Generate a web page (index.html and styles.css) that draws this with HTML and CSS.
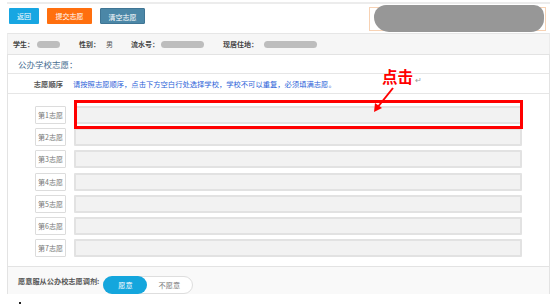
FILE: index.html
```html
<!DOCTYPE html>
<html lang="zh-CN">
<head>
    <meta charset="UTF-8">
    <title>志愿填报</title>
    <link rel="stylesheet" href="styles.css">
</head>
<body>
    <div class="wrap">
        <div class="toolbar">
            <button class="btn btn-back">返回</button>
            <button class="btn btn-submit">提交志愿</button>
            <button class="btn btn-clear">清空志愿</button>
            <div class="school-box"><div class="school-mask"></div></div>
        </div>

        <div class="info-bar">
            <span class="info-label">学生：</span><span class="mask mask-name"></span>
            <span class="info-label gap-l">性别：</span><span class="info-value">男</span>
            <span class="info-label gap-m">流水号：</span><span class="mask mask-no"></span>
            <span class="info-label gap-l">现居住地：</span><span class="mask mask-addr"></span>
        </div>

        <div class="panel">
            <div class="panel-title">公办学校志愿：</div>
            <div class="tip-row">
                <span class="tip-label">志愿顺序</span>
                <span class="tip-text">请按照志愿顺序，点击下方空白行处选择学校，学校不可以重复，必须填满志愿。</span>
            </div>

            <div class="choices">
                <div class="choice"><span class="choice-no">第1志愿</span><div class="choice-input"></div></div>
                <div class="choice"><span class="choice-no">第2志愿</span><div class="choice-input"></div></div>
                <div class="choice"><span class="choice-no">第3志愿</span><div class="choice-input"></div></div>
                <div class="choice"><span class="choice-no">第4志愿</span><div class="choice-input"></div></div>
                <div class="choice"><span class="choice-no">第5志愿</span><div class="choice-input"></div></div>
                <div class="choice"><span class="choice-no">第6志愿</span><div class="choice-input"></div></div>
                <div class="choice"><span class="choice-no">第7志愿</span><div class="choice-input"></div></div>
            </div>

            <div class="adjust-row">
                <span class="adjust-label">愿意服从公办校志愿调剂:</span>
                <div class="switch">
                    <span class="switch-item active">愿意</span>
                    <span class="switch-item">不愿意</span>
                </div>
            </div>
        </div>
    </div>
    <div class="foot-mark"><span></span></div>

    <!-- 截图标注 -->
    <div class="mark-box"></div>
    <div class="mark-text">点击<span class="mark-return">↵</span></div>
    <svg class="mark-arrow" width="30" height="30" viewBox="0 0 30 30">
        <line x1="23" y1="2" x2="7" y2="22" stroke="#ff0000" stroke-width="2"/>
        <polygon points="4,26 5,17 12,22" fill="#ff0000"/>
    </svg>
</body>
</html>
```

FILE: styles.css
```css
body {
    margin: 0;
    font-family: "Noto Sans CJK SC", "Noto Sans", sans-serif;
    background: #fff;
    color: #333;
    position: relative;
    width: 554px;
    height: 304px;
    overflow: hidden;
}

.wrap {
    margin: 2px 0 0 7px;
    width: 543px;
}

/* 顶部按钮 */
.toolbar {
    display: flex;
    align-items: flex-start;
    gap: 8px;
    height: 29px;
    padding-left: 2px;
    border-top: 2px solid #ececec;
}

.btn {
    margin-top: 4px;
    height: 16px;
    padding: 0;
    border: none;
    border-radius: 1px;
    color: #fff;
    font-family: inherit;
    font-size: 7px;
    line-height: 16px;
    text-align: center;
}

.btn-back { width: 30px; background-color: #17a6e2; }
.btn-submit { width: 45px; background-color: #ff6f0e; }
.btn-clear { width: 45px; background-color: #4b87a7; border: 1px solid #3f7594; }

.school-box {
    margin: 3px 4px 0 auto;
    width: 175px;
    height: 22px;
    border: 1px solid #f7d2b4;
}

.school-mask {
    margin: -3px 0 0 4px;
    width: 170px;
    height: 27px;
    background: #979797;
    border-radius: 12px 10px 13px 15px;
}

/* 学生信息 */
.info-bar {
    display: flex;
    align-items: center;
    height: 20px;
    padding-left: 5px;
    background: #f6f6f6;
    border-top: 1px solid #e6e6e6;
    border-left: 1px solid #ececec;
    border-right: 1px solid #ececec;
    font-size: 7px;
}

.info-label {
    font-weight: bold;
    color: #444;
}

.info-value {
    margin-left: 6px;
    color: #555;
}

.gap-l { margin-left: 19px; }
.gap-m { margin-left: 18px; }

.mask {
    height: 7px;
    margin-left: 3px;
    border-radius: 4px;
    background: #bdbdbd;
}

.mask-name { width: 23px; }
.mask-no { width: 43px; margin-left: 2px; }
.mask-addr { width: 53px; margin-left: 6px; }

/* 志愿面板 */
.panel {
    border: 1px solid #e3e3e3;
    border-bottom: none;
}

.panel-title {
    height: 18px;
    padding-left: 10px;
    line-height: 18px;
    font-size: 8.5px;
    color: #4b6f92;
    border-bottom: 1px solid #e6e6e6;
}

.tip-row {
    display: flex;
    align-items: center;
    gap: 10px;
    height: 19px;
    border-bottom: 1px solid #e6e6e6;
    font-size: 7.3px;
}

.tip-label {
    width: 55px;
    text-align: right;
    font-weight: bold;
    color: #555;
}

.tip-text {
    color: #2b5fd8;
}

.choices {
    display: flex;
    flex-direction: column;
    gap: 4.2px;
    padding: 12px 0 9px 27px;
}

.choice {
    display: flex;
    gap: 8px;
    height: 18px;
}

.choice-no {
    width: 29px;
    border: 1px solid #dcdcdc;
    border-radius: 1px;
    background: #fff;
    color: #777;
    font-size: 7px;
    line-height: 16px;
    text-align: center;
}

.choice-input {
    width: 444px;
    height: 14px;
    background: #f2f2f2;
    border: 2px solid #e2e2e2;
    border-radius: 1px;
}

/* 调剂 */
.adjust-row {
    display: flex;
    align-items: center;
    gap: 4px;
    height: 27px;
    padding: 0 0 0 10px;
    background: #f9f9f9;
    border-top: 1px solid #e3e3e3;
}

.adjust-label {
    font-size: 7.2px;
    font-weight: bold;
    color: #555;
}

.switch {
    display: flex;
    margin-top: 8px;
    width: 88px;
    height: 16px;
    border: 1px solid #dedede;
    border-radius: 9px;
    background: #fff;
}

.switch-item {
    width: 44px;
    font-size: 7.2px;
    line-height: 16px;
    text-align: center;
    color: #777;
}

.switch-item.active {
    margin: -1px 0 0 -1px;
    height: 18px;
    line-height: 18px;
    border-radius: 9px;
    background: #14a6dd;
    color: #fff;
}

.foot-mark {
    padding: 8px 0 0 19px;
}

.foot-mark span {
    display: block;
    width: 2px;
    height: 3px;
    background: #222;
}

/* 红色标注 */
.mark-box {
    position: absolute;
    left: 74px;
    top: 100px;
    width: 443px;
    height: 23px;
    border: 3px solid #ff0000;
}

.mark-text {
    position: absolute;
    left: 382px;
    top: 66px;
    font-size: 15.5px;
    line-height: 20px;
    color: #ff0000;
    font-weight: bold;
}

.mark-return {
    margin-left: 2px;
    font-size: 8px;
    font-weight: normal;
    color: #999;
}

.mark-arrow {
    position: absolute;
    left: 370px;
    top: 86px;
}
```
